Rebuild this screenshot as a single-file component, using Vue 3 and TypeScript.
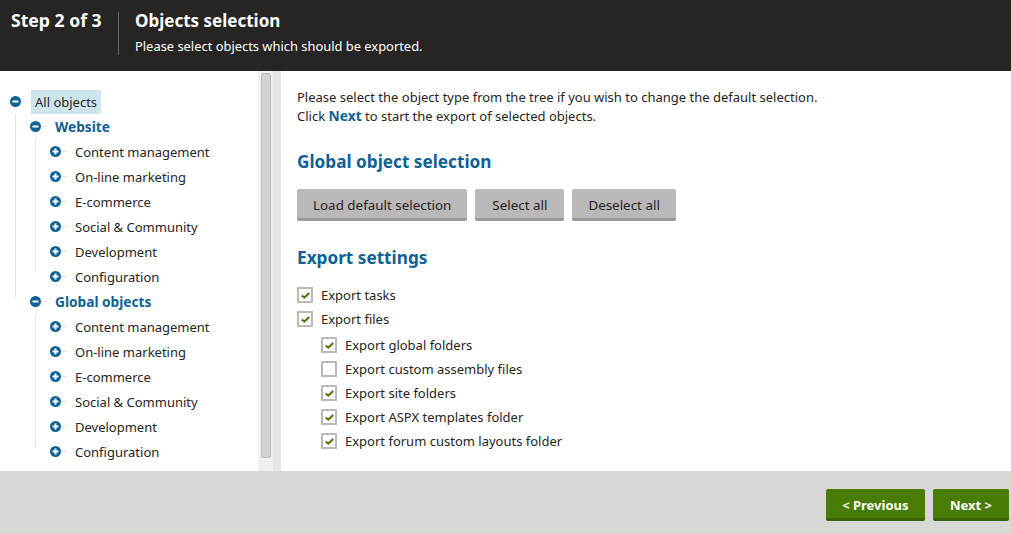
<script setup lang="ts">
const categories = [
  'Content management',
  'On-line marketing',
  'E-commerce',
  'Social & Community',
  'Development',
  'Configuration'
]

const sites = ['Website', 'Global objects']

const topOptions = [
  { label: 'Export tasks', checked: true },
  { label: 'Export files', checked: true }
]

const fileOptions = [
  { label: 'Export global folders', checked: true },
  { label: 'Export custom assembly files', checked: false },
  { label: 'Export site folders', checked: true },
  { label: 'Export ASPX templates folder', checked: true },
  { label: 'Export forum custom layouts folder', checked: true }
]
</script>

<template>
  <div class="wizard">
    <header class="header">
      <div class="step">Step 2 of 3</div>
      <div class="title-block">
        <h1>Objects selection</h1>
        <p>Please select objects which should be exported.</p>
      </div>
    </header>

    <main class="main">
      <aside class="tree">
        <ul class="tree-list root-list">
          <li>
            <div class="tree-row">
              <svg class="toggle" width="11" height="11" viewBox="0 0 11 11">
                <circle cx="5.5" cy="5.5" r="5.5" fill="#0f6194" />
                <rect x="2.5" y="4.5" width="6" height="2" fill="#fff" />
              </svg>
              <span class="tree-label selected">All objects</span>
            </div>
            <ul class="tree-list">
              <li v-for="site in sites" :key="site">
                <div class="tree-row">
                  <svg class="toggle" width="11" height="11" viewBox="0 0 11 11">
                    <circle cx="5.5" cy="5.5" r="5.5" fill="#0f6194" />
                    <rect x="2.5" y="4.5" width="6" height="2" fill="#fff" />
                  </svg>
                  <span class="tree-label site">{{ site }}</span>
                </div>
                <ul class="tree-list">
                  <li v-for="cat in categories" :key="cat">
                    <div class="tree-row">
                      <svg class="toggle" width="11" height="11" viewBox="0 0 11 11">
                        <circle cx="5.5" cy="5.5" r="5.5" fill="#0f6194" />
                        <rect x="2.5" y="4.5" width="6" height="2" fill="#fff" />
                        <rect x="4.5" y="2.5" width="2" height="6" fill="#fff" />
                      </svg>
                      <span class="tree-label">{{ cat }}</span>
                    </div>
                  </li>
                </ul>
              </li>
            </ul>
          </li>
        </ul>
      </aside>

      <div class="scrollbar"><div class="thumb"></div></div>
      <div class="gutter"></div>

      <section class="content">
        <p class="intro">
          Please select the object type from the tree if you wish to change the default selection.<br />
          Click <strong>Next</strong> to start the export of selected objects.
        </p>

        <h2>Global object selection</h2>
        <div class="actions">
          <button class="btn">Load default selection</button>
          <button class="btn">Select all</button>
          <button class="btn">Deselect all</button>
        </div>

        <h2 class="settings-title">Export settings</h2>
        <div class="options">
          <label v-for="opt in topOptions" :key="opt.label" class="option">
            <span class="box">
              <svg v-if="opt.checked" width="9" height="7" viewBox="0 0 9 7">
                <path d="M.7 3.4l2.6 2.2L8.3 1" fill="none" stroke="#4a7d04" stroke-width="2" />
              </svg>
            </span>
            {{ opt.label }}
          </label>
        </div>
        <div class="options nested">
          <label v-for="opt in fileOptions" :key="opt.label" class="option">
            <span class="box">
              <svg v-if="opt.checked" width="9" height="7" viewBox="0 0 9 7">
                <path d="M.7 3.4l2.6 2.2L8.3 1" fill="none" stroke="#4a7d04" stroke-width="2" />
              </svg>
            </span>
            {{ opt.label }}
          </label>
        </div>
      </section>
    </main>

    <footer class="footer">
      <button class="btn primary">&lt; Previous</button>
      <button class="btn primary">Next &gt;</button>
    </footer>
  </div>
</template>

<style scoped>
.wizard {
  display: flex;
  flex-direction: column;
  height: 534px;
  width: 1011px;
  overflow: hidden;
  font-family: "Noto Sans", "Open Sans", sans-serif;
  font-size: 13px;
  color: #262524;
}

.header {
  display: flex;
  align-items: flex-start;
  height: 71px;
  box-sizing: border-box;
  padding: 12px 0 0 11px;
  background: #262524;
  color: #fff;
}

.step {
  width: 107px;
  height: 43px;
  border-right: 1px solid #6b6a69;
  font-size: 17.6px;
  font-weight: 700;
  line-height: 17px;
}

.title-block {
  padding-left: 16px;
}

.title-block h1 {
  margin: 0;
  font-size: 17px;
  line-height: 17px;
  font-weight: 700;
}

.title-block p {
  margin: 9px 0 0;
  font-size: 12.9px;
  line-height: 17px;
}

.main {
  display: flex;
  height: 400px;
  background: #fff;
}

.tree {
  width: 258px;
  flex: none;
  padding-top: 18px;
  box-sizing: border-box;
  overflow: hidden;
}

.tree-list {
  margin: 0;
  padding: 0 0 0 20px;
  list-style: none;
}

.tree-list.root-list {
  padding-left: 10px;
}

.tree-list li {
  position: relative;
}

/* connector lines */
.tree-list .tree-list li::before {
  content: "";
  position: absolute;
  left: -15px;
  top: 0;
  bottom: 0;
  width: 1px;
  background: #e3e3e3;
}

.tree-list .tree-list li:last-child::before {
  bottom: auto;
  height: 8px;
}

.tree-row {
  display: flex;
  align-items: center;
  height: 25px;
}

.toggle {
  position: relative;
  flex: none;
  display: block;
  margin-right: 10px;
}

.tree-row::before {
  content: "";
  order: 1;
  flex: none;
  width: 6px;
  height: 1px;
  margin-left: -10px;
  margin-right: 4px;
  background: #e3e3e3;
}

.tree-label {
  order: 2;
  padding: 0 4px;
  white-space: nowrap;
  line-height: 24px;
}

.tree-label.selected {
  background: #cfe5ed;
}

.tree-label.site {
  color: #0f6194;
  font-size: 13.7px;
  font-weight: 700;
}

.scrollbar {
  flex: none;
  width: 15px;
  box-sizing: border-box;
  padding: 2px 0 0 3px;
  background: #f1f1f1;
}

.thumb {
  width: 10px;
  height: 385px;
  box-sizing: border-box;
  background: #d3d3d3;
  border: 1px solid #bcbcbc;
  border-radius: 2px;
}

.gutter {
  flex: none;
  width: 8px;
  background: #e5e5e5;
}

.content {
  flex: 1;
  min-width: 0;
  margin-right: 1px;
  padding: 17px 0 0 16px;
}

.intro {
  margin: 0;
  line-height: 19px;
}

.intro strong {
  color: #0f6194;
  font-size: 13.8px;
  line-height: 1;
}

h2 {
  margin: 24px 0 0;
  font-size: 17.2px;
  line-height: 24px;
  font-weight: 700;
  color: #0f6194;
}

.actions {
  display: flex;
  gap: 8px;
  margin-top: 15px;
}

.actions .btn {
  min-width: 89px;
}

.btn {
  height: 32px;
  box-sizing: border-box;
  padding: 2px 16px 0;
  border: 0;
  border-bottom: 3px solid #9a9898;
  border-radius: 2px;
  background: #bab8b8;
  font-family: inherit;
  font-size: 13.4px;
  color: #262524;
  white-space: nowrap;
}

.settings-title {
  margin-top: 25px;
}

.options {
  margin-top: 13px;
}

.nested {
  margin-top: 2px;
  padding-left: 24px;
}

.option {
  display: flex;
  align-items: center;
  gap: 8px;
  height: 24px;
}

.box {
  flex: none;
  display: flex;
  align-items: center;
  justify-content: center;
  width: 16px;
  height: 16px;
  box-sizing: border-box;
  border: 2px solid #bab8b8;
  background: #fff;
}

.footer {
  flex: 1;
  display: flex;
  justify-content: flex-end;
  align-items: flex-start;
  gap: 8px;
  padding: 18px 2px 0 0;
  background: #d8d9d7;
}

.btn.primary {
  min-width: 76px;
  padding: 2px 16.5px 0;
  background: #497c04;
  border-bottom-color: #3a6303;
  color: #fff;
  font-size: 13px;
  font-weight: 700;
}
</style>
